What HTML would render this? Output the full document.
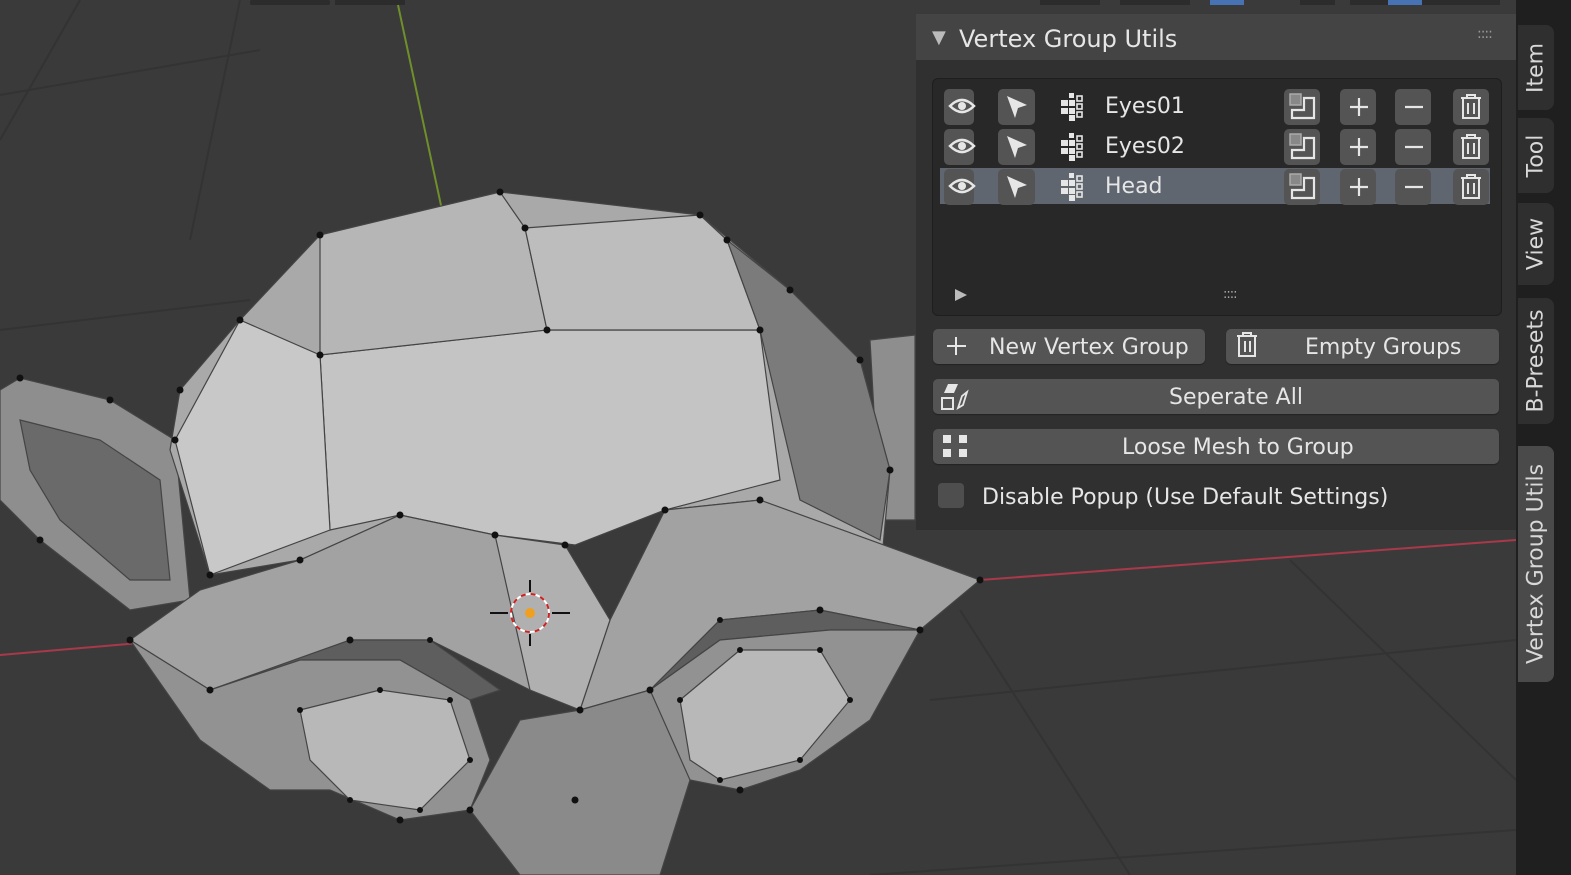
<!DOCTYPE html>
<html><head><style>
body{margin:0;width:1571px;height:875px;overflow:hidden;background:#3a3a3a;font-family:"Liberation Sans","DejaVu Sans",sans-serif;color:#e6e6e6}
.abs{position:absolute}
.btn{position:absolute;background:#545454;border-radius:5px;box-shadow:0 1px 1px #222}
.t{font-size:22px;position:absolute;white-space:nowrap;font-family:"DejaVu Sans",sans-serif}
.tab{position:absolute;left:1518px;width:36px;background:#2f2f2f;border-radius:0 8px 8px 0}
.tab span{position:absolute;left:50%;top:50%;transform:translate(-50%,-50%) rotate(-90deg);font-family:"DejaVu Sans",sans-serif;font-size:22px;white-space:nowrap;color:#d8d8d8}
</style></head><body>
<svg class="abs" style="left:0;top:0" width="1571" height="875">
<g fill="#2c2c2c"><rect x="250" y="0" width="80" height="5" rx="2"/><rect x="335" y="0" width="70" height="5"/><rect x="1040" y="0" width="60" height="5"/><rect x="1120" y="0" width="70" height="5"/><rect x="1300" y="0" width="35" height="5"/><rect x="1350" y="0" width="150" height="5"/></g>
<rect x="1210" y="0" width="34" height="5" fill="#4772b3"/><rect x="1388" y="0" width="34" height="5" fill="#4772b3"/>
<g stroke="#333" stroke-width="2">
<line x1="0" y1="95" x2="260" y2="50"/><line x1="0" y1="330" x2="250" y2="300"/>
<line x1="80" y1="0" x2="0" y2="140"/><line x1="240" y1="0" x2="190" y2="240"/>
<line x1="960" y1="610" x2="1130" y2="875"/><line x1="1290" y1="560" x2="1516" y2="780"/>
<line x1="930" y1="700" x2="1516" y2="640"/><line x1="870" y1="875" x2="1516" y2="830"/>
</g>
<line x1="398" y1="5" x2="442" y2="210" stroke="#6f8f2a" stroke-width="2"/>
<line x1="0" y1="655" x2="140" y2="643" stroke="#a8394a" stroke-width="2"/>
<line x1="980" y1="580" x2="1516" y2="540" stroke="#a8394a" stroke-width="2"/>
<g stroke="#444" stroke-width="1.2">
<polygon fill="#8e8e8e" points="0,390 20,378 110,400 175,440 190,600 130,610 40,540 0,500"/>
<polygon fill="#6a6a6a" points="20,420 100,440 160,480 170,580 130,580 60,520 30,470"/>
<polygon fill="#8e8e8e" points="870,340 915,335 915,520 880,520"/>
<polygon fill="#a9a9a9" points="320,235 500,192 700,215 790,290 860,360 890,470 880,580 760,500 665,510 575,545 495,535 400,515 300,560 210,575 170,450 180,390 240,320"/>
<polygon fill="#c4c4c4" points="320,355 545,330 760,330 780,480 665,510 575,545 495,535 400,515 330,530"/>
<polygon fill="#b6b6b6" points="320,235 500,192 525,228 547,330 320,355"/>
<polygon fill="#bdbdbd" points="525,228 700,215 727,240 760,330 547,330"/>
<polygon fill="#7b7b7b" points="727,240 790,290 860,360 890,470 880,540 800,500 760,330"/>
<polygon fill="#c8c8c8" points="175,440 240,320 320,355 330,530 210,575"/>
<polygon fill="#a2a2a2" points="130,640 200,590 300,560 400,515 495,535 530,610 580,710 530,690 430,640 350,640 260,680 210,690"/>
<polygon fill="#a2a2a2" points="580,710 610,620 665,510 760,500 980,580 920,630 820,610 720,620 650,690"/>
<polygon fill="#5e5e5e" points="210,690 350,640 430,640 500,690 470,700 400,660 300,660"/>
<polygon fill="#5e5e5e" points="650,690 720,620 820,610 920,630 830,630 720,640"/>
<polygon fill="#929292" points="130,640 210,690 300,660 400,660 470,700 490,760 470,810 400,820 330,790 270,790 200,740"/>
<polygon fill="#929292" points="650,690 720,640 830,630 920,630 870,720 800,770 740,790 690,780 660,740"/>
<polygon fill="#b8b8b8" points="300,710 380,690 450,700 470,760 420,810 350,800 310,760"/>
<polygon fill="#b8b8b8" points="680,700 740,650 820,650 850,700 800,760 720,780 690,760"/>
<polygon fill="#8a8a8a" points="470,810 520,720 580,710 650,690 690,780 660,875 520,875"/>
<polygon fill="#b0b0b0" points="495,535 565,545 610,620 580,710 530,690"/>
</g>
<g fill="#111">
<circle cx="320" cy="235" r="3.5"/><circle cx="500" cy="192" r="3.5"/><circle cx="525" cy="228" r="3.5"/><circle cx="700" cy="215" r="3.5"/><circle cx="727" cy="240" r="3.5"/><circle cx="790" cy="290" r="3.5"/><circle cx="547" cy="330" r="3.5"/><circle cx="760" cy="330" r="3.5"/><circle cx="320" cy="355" r="3.5"/><circle cx="240" cy="320" r="3.5"/><circle cx="180" cy="390" r="3.5"/><circle cx="175" cy="440" r="3.5"/><circle cx="210" cy="575" r="3.5"/><circle cx="300" cy="560" r="3.5"/><circle cx="400" cy="515" r="3.5"/><circle cx="495" cy="535" r="3.5"/><circle cx="565" cy="545" r="3.5"/><circle cx="665" cy="510" r="3.5"/><circle cx="760" cy="500" r="3.5"/><circle cx="980" cy="580" r="3.5"/><circle cx="920" cy="630" r="3.5"/><circle cx="820" cy="610" r="3.5"/><circle cx="130" cy="640" r="3.5"/><circle cx="210" cy="690" r="3.5"/><circle cx="350" cy="640" r="3.5"/><circle cx="580" cy="710" r="3.5"/><circle cx="470" cy="810" r="3.5"/><circle cx="400" cy="820" r="3.5"/><circle cx="650" cy="690" r="3.5"/><circle cx="740" cy="790" r="3.5"/><circle cx="860" cy="360" r="3.5"/><circle cx="890" cy="470" r="3.5"/><circle cx="20" cy="378" r="3.5"/><circle cx="110" cy="400" r="3.5"/><circle cx="40" cy="540" r="3.5"/><circle cx="575" cy="800" r="3.5"/>
<circle cx="300" cy="710" r="3"/><circle cx="380" cy="690" r="3"/><circle cx="450" cy="700" r="3"/><circle cx="470" cy="760" r="3"/><circle cx="420" cy="810" r="3"/><circle cx="350" cy="800" r="3"/><circle cx="680" cy="700" r="3"/><circle cx="740" cy="650" r="3"/><circle cx="820" cy="650" r="3"/><circle cx="850" cy="700" r="3"/><circle cx="800" cy="760" r="3"/><circle cx="720" cy="780" r="3"/><circle cx="430" cy="640" r="3"/><circle cx="720" cy="620" r="3"/>
</g>
<circle cx="530" cy="613" r="19" fill="none" stroke="#fff" stroke-width="2"/>
<circle cx="530" cy="613" r="19" fill="none" stroke="#d02020" stroke-width="2" stroke-dasharray="5 5"/>
<circle cx="530" cy="613" r="5" fill="#f0a020"/>
<g stroke="#111" stroke-width="2"><line x1="490" y1="613" x2="508" y2="613"/><line x1="552" y1="613" x2="570" y2="613"/><line x1="530" y1="580" x2="530" y2="592"/><line x1="530" y1="634" x2="530" y2="646"/></g>
</svg>

<div class="abs" style="left:1516px;top:0;width:55px;height:875px;background:#1f1f1f"></div>
<div class="tab" style="top:25px;height:85px"><span>Item</span></div>
<div class="tab" style="top:118px;height:75px"><span>Tool</span></div>
<div class="tab" style="top:203px;height:82px"><span>View</span></div>
<div class="tab" style="top:298px;height:126px"><span>B-Presets</span></div>
<div class="tab" style="top:446px;height:236px;background:#4a4a4a"><span>Vertex Group Utils</span></div>

<div class="abs" style="left:916px;top:14px;width:600px;height:516px;background:#303030"></div>
<div class="abs" style="left:916px;top:14px;width:600px;height:46px;background:#444"></div>
<div class="t" style="left:932px;top:27px;font-size:18px;color:#bbb">▼</div>
<div class="t" style="left:959px;top:25px;font-size:24px">Vertex Group Utils</div>
<div class="t" style="left:1477px;top:26px;font-size:14px;color:#999;letter-spacing:-1px">::::</div>

<div class="abs" style="left:932px;top:78px;width:568px;height:236px;background:#282828;border-radius:6px;border:1px solid #1e1e1e"></div>
<div class="abs" style="left:940px;top:168px;width:550px;height:36px;background:#5f6670"></div>

<svg class="abs" style="left:0;top:0" width="1571" height="875">
<g id="row">
<rect x="944" y="89" width="30" height="36" rx="5" fill="#545454"/>
<rect x="998" y="89" width="37" height="36" rx="5" fill="#545454"/>
<rect x="1284" y="89" width="36" height="36" rx="5" fill="#545454"/>
<rect x="1340" y="89" width="36" height="36" rx="5" fill="#545454"/>
<rect x="1395" y="89" width="36" height="36" rx="5" fill="#545454"/>
<rect x="1453" y="89" width="36" height="36" rx="5" fill="#545454"/>
<path d="M950 106 Q962 94 974 106 Q962 118 950 106Z" fill="none" stroke="#e6e6e6" stroke-width="2.5"/><circle cx="962" cy="106" r="4" fill="#e6e6e6"/>
<path d="M1007 96 L1027 105 L1018 108 L1015 118Z" fill="#e6e6e6"/>
<g fill="#e6e6e6"><rect x="1061" y="100" width="7" height="6"/><rect x="1061" y="108" width="7" height="6"/><rect x="1069" y="93" width="5" height="5"/><rect x="1069" y="100" width="6" height="6"/><rect x="1069" y="108" width="6" height="6"/><rect x="1069" y="115" width="6" height="6"/></g>
<g fill="none" stroke="#e6e6e6" stroke-width="1.6"><rect x="1077" y="96" width="5" height="5"/><rect x="1077" y="104" width="5" height="5"/><rect x="1077" y="112" width="5" height="5"/></g>
<rect x="1290" y="94" width="11" height="11" fill="#888" stroke="#aaa" stroke-width="1.5"/>
<path d="M1292 118 H1314 V98 H1304 V110 H1292Z" fill="none" stroke="#e6e6e6" stroke-width="2.2"/>
<path d="M1350 107 H1368 M1359 98 V116" stroke="#e6e6e6" stroke-width="2.2"/>
<path d="M1405 107 H1423" stroke="#e6e6e6" stroke-width="2.2"/>
<path d="M1461 98 H1481 M1467 98 V95 H1475 V98 M1463 98 V118 H1479 V98 M1468 103 V114 M1474 103 V114" fill="none" stroke="#e6e6e6" stroke-width="2"/>
</g>
<use href="#row" y="40"/><use href="#row" y="80"/>
<path d="M955 289 L967 295 L955 301Z" fill="#bbb"/>
</svg>
<div class="t" style="left:1105px;top:94px">Eyes01</div>
<div class="t" style="left:1105px;top:134px">Eyes02</div>
<div class="t" style="left:1105px;top:174px">Head</div>
<div class="t" style="left:1223px;top:287px;font-size:13px;color:#aaa;letter-spacing:-1px">::::</div>

<div class="btn" style="left:933px;top:329px;width:272px;height:35px"></div>
<div class="btn" style="left:1226px;top:329px;width:273px;height:35px"></div>
<div class="btn" style="left:933px;top:379px;width:566px;height:35px"></div>
<div class="btn" style="left:933px;top:429px;width:566px;height:35px"></div>
<div class="abs" style="left:938px;top:483px;width:26px;height:25px;background:#4e4e4e;border-radius:4px"></div>
<svg class="abs" style="left:0;top:0" width="1571" height="875">
<path d="M947 346 H966 M956 337 V355" stroke="#e6e6e6" stroke-width="2"/>
<path d="M1237 336 H1257 M1243 336 V333 H1251 V336 M1239 336 V356 H1255 V336 M1245 341 V352 M1250 341 V352" fill="none" stroke="#e6e6e6" stroke-width="2"/>
<rect x="942" y="398" width="11" height="11" fill="none" stroke="#e6e6e6" stroke-width="2"/>
<path d="M944 393 L948 384 H958 L954 393Z" fill="#e6e6e6"/>
<path d="M958 408 L962 396 L967 392 L963 405Z" fill="none" stroke="#e6e6e6" stroke-width="1.8"/>
<g fill="#e6e6e6"><rect x="943" y="435" width="8" height="8"/><rect x="959" y="435" width="8" height="8"/><rect x="943" y="449" width="8" height="8"/><rect x="959" y="449" width="8" height="8"/></g>
</svg>
<div class="t" style="left:989px;top:335px">New Vertex Group</div>
<div class="t" style="left:1305px;top:335px">Empty Groups</div>
<div class="t" style="left:1169px;top:385px">Seperate All</div>
<div class="t" style="left:1122px;top:435px">Loose Mesh to Group</div>
<div class="t" style="left:982px;top:485px">Disable Popup (Use Default Settings)</div>
</body></html>
